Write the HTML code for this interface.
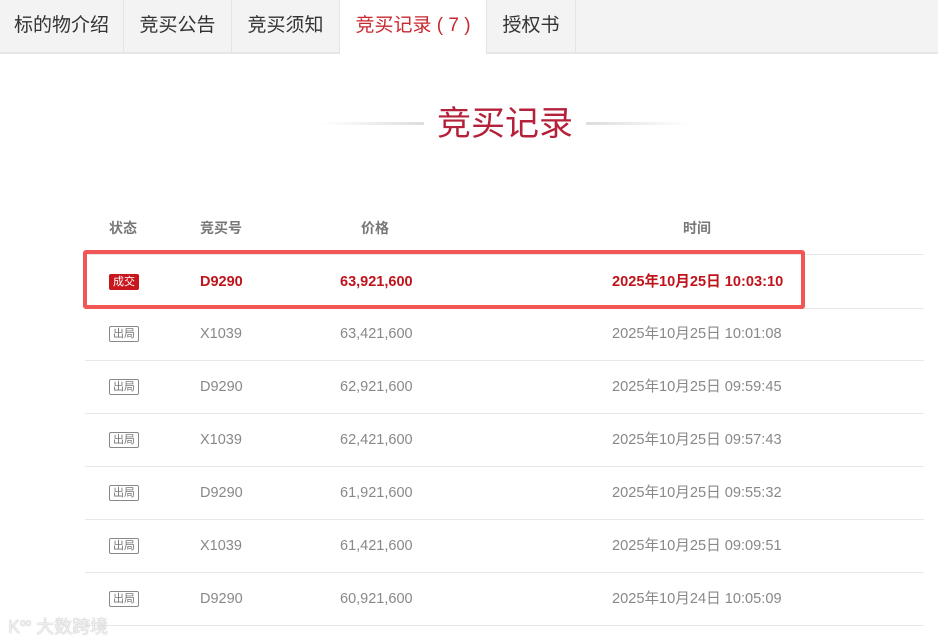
<!DOCTYPE html>
<html><head><meta charset="utf-8"><style>
body{margin:0;width:938px;height:643px;background:#fff;font-family:"Liberation Sans","Noto Sans CJK SC",sans-serif;position:relative;overflow:hidden}
.tabs{position:absolute;left:0;top:0;width:938px;height:54px;background:#f3f3f3;border-bottom:2px solid #e6e6e6;box-sizing:border-box}
.tab{position:absolute;top:0;height:54px;line-height:52px;font-size:19px;color:#333;text-align:center;border-right:1px solid #e4e4e4;box-sizing:border-box}
.tab.on{background:#fff;color:#c8282e;height:54px}
.title{position:absolute;left:437px;top:100px;font-size:34px;color:#b5213a;line-height:48px}
.ln{position:absolute;top:122px;height:3px}
.hd{position:absolute;top:218px;font-size:14px;color:#777;font-weight:bold}
.row{position:absolute;left:85px;width:839px;height:53px;border-bottom:1px solid #e8e8e8}
.c{position:absolute;top:0;line-height:54px;font-size:14.5px;color:#888}
.t{font-size:14.6px}
.tag{position:absolute;left:24px;top:19px;width:28px;height:14px;border:1px solid #888;border-radius:2px;font-size:11px;line-height:14px;text-align:center;color:#777}
.box{position:absolute;left:83px;top:250px;width:722px;height:59px;border:4px solid #f25555;border-radius:3px;box-sizing:border-box}
</style></head><body>
<div class="tabs">
<div class="tab" style="left:0;width:124px">标的物介绍</div>
<div class="tab" style="left:124px;width:108px">竞买公告</div>
<div class="tab" style="left:232px;width:108px">竞买须知</div>
<div class="tab on" style="left:340px;width:147px">竞买记录 ( 7 )</div>
<div class="tab" style="left:487px;width:89px">授权书</div>
</div>
<div class="ln" style="left:320px;width:104px;background:linear-gradient(90deg,#fff,#ddd)"></div>
<div class="ln" style="left:586px;width:104px;background:linear-gradient(90deg,#ddd,#fff)"></div>
<div class="title">竞买记录</div>
<div class="hd" style="left:109px">状态</div>
<div class="hd" style="left:200px">竞买号</div>
<div class="hd" style="left:361px">价格</div>
<div class="hd" style="left:683px">时间</div>
<div class="row" style="top:254px;border-top:1px solid #e8e8e8"><span class="tag" style="background:#c8161d;border-color:#c8161d;color:#fff">成交</span><span class="c" style="left:115px;color:#c0141c;font-weight:bold">D9290</span><span class="c" style="left:255px;color:#c0141c;font-weight:bold">63,921,600</span><span class="c t" style="left:527px;color:#c0141c;font-weight:bold">2025年10月25日 10:03:10</span></div>
<div class="row" style="top:307px"><span class="tag">出局</span><span class="c" style="left:115px">X1039</span><span class="c" style="left:255px">63,421,600</span><span class="c t" style="left:527px">2025年10月25日 10:01:08</span></div>
<div class="row" style="top:360px"><span class="tag">出局</span><span class="c" style="left:115px">D9290</span><span class="c" style="left:255px">62,921,600</span><span class="c t" style="left:527px">2025年10月25日 09:59:45</span></div>
<div class="row" style="top:413px"><span class="tag">出局</span><span class="c" style="left:115px">X1039</span><span class="c" style="left:255px">62,421,600</span><span class="c t" style="left:527px">2025年10月25日 09:57:43</span></div>
<div class="row" style="top:466px"><span class="tag">出局</span><span class="c" style="left:115px">D9290</span><span class="c" style="left:255px">61,921,600</span><span class="c t" style="left:527px">2025年10月25日 09:55:32</span></div>
<div class="row" style="top:519px"><span class="tag">出局</span><span class="c" style="left:115px">X1039</span><span class="c" style="left:255px">61,421,600</span><span class="c t" style="left:527px">2025年10月25日 09:09:51</span></div>
<div class="row" style="top:572px"><span class="tag">出局</span><span class="c" style="left:115px">D9290</span><span class="c" style="left:255px">60,921,600</span><span class="c t" style="left:527px">2025年10月24日 10:05:09</span></div>
<div class="box"></div>
<div style="position:absolute;left:8px;top:613px;font-size:18px;color:#eee;text-shadow:0 0 1px #999">K<sup style="font-size:10px">oo</sup> 大数跨境</div>
</body></html>
